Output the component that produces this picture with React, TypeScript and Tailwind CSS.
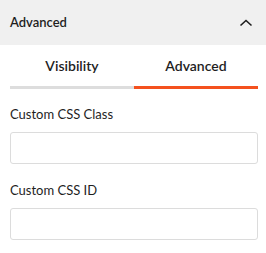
import React from "react";

export default function App() {
  return (
    <div className="w-[266px] h-[253px] bg-white text-[#1e1e1e]" style={{ fontFamily: 'Lato, "Noto Sans", sans-serif' }}>
      <div className="h-[45px] bg-[#f0f0f0] pl-[10px] pr-[8px] flex items-center justify-between">
        <span className="text-[13px] font-semibold text-[#1e1e1e]">Advanced</span>
        <svg width="14" height="8" viewBox="0 0 14 8" className="mr-[5px]">
          <path d="M1.5 6.5 L7 1.5 L12.5 6.5" fill="none" stroke="#1e1e1e" strokeWidth="1.6" />
        </svg>
      </div>
      <div className="pl-[10px] pr-[8px]">
        <div className="flex">
          <div className="flex-1 h-[44px] flex items-center justify-center border-b-[3px] border-[#dddddd] text-[14px] font-semibold">
            Visibility
          </div>
          <div className="flex-1 h-[44px] flex items-center justify-center border-b-[3px] border-[#f4511e] text-[14px] font-semibold">
            Advanced
          </div>
        </div>
        <div className="mt-[16px] text-[13px] leading-[18px]">Custom CSS Class</div>
        <input className="mt-[9px] block w-full h-[32px] border border-[#dcdcdc] rounded-[3px] outline-none" />
        <div className="mt-[17px] text-[13px] leading-[18px]">Custom CSS ID</div>
        <input className="mt-[9px] block w-full h-[32px] border border-[#dcdcdc] rounded-[3px] outline-none" />
      </div>
    </div>
  );
}
